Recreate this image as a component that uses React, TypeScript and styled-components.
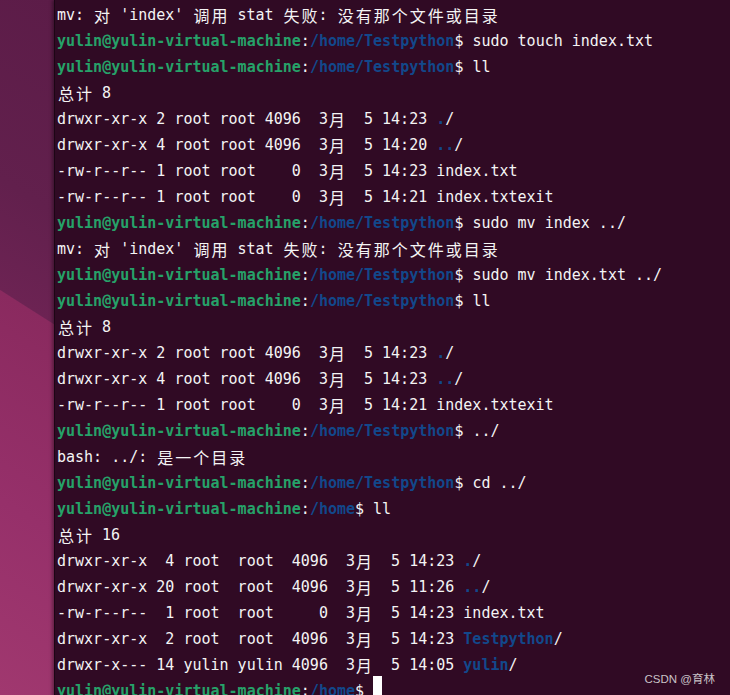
import React from "react";
import styled, { createGlobalStyle } from "styled-components";

const Global = createGlobalStyle`
  html, body { margin: 0; padding: 0; background: #300a24; }
  body { overflow: hidden; }
`;

const Screen = styled.div`
  display: flex;
  flex-direction: row;
  width: 730px;
  height: 695px;
  overflow: hidden;
  position: relative;
`;

const Wallpaper = styled.div`
  width: 54px;
  flex: 0 0 54px;
  height: 100%;
  background:
    linear-gradient(212.5deg,
      #5c1c48 0px,
      #62204d 180px,
      #6c2353 273px,
      #8a2a5f 274px,
      #96306a 450px,
      #a0386f 615px);
`;

const Terminal = styled.div`
  flex: 1;
  height: 100%;
  background: #300a24;
  border-left: 1px solid #1c0615;
  box-shadow: -2px 0 3px rgba(0, 0, 0, 0.35);
  padding: 2px 0 0 2px;
  font-family: "DejaVu Sans Mono", "Liberation Mono", monospace;
  font-size: 15px;
  line-height: 26px;
  color: #f4f4f4;
`;

const Line = styled.div`
  white-space: pre;
  height: 26px;
`;

const Seg = styled.span<{ $c: "n" | "g" | "b" }>`
  color: ${(p) => (p.$c === "g" ? "#26a269" : p.$c === "b" ? "#12488b" : "#f4f4f4")};
  font-weight: ${(p) => (p.$c === "n" ? "normal" : "bold")};
`;

const Wide = styled.span`
  display: inline-block;
  width: 18px;
  text-align: center;
  font-family: "Noto Sans CJK SC", sans-serif;
  font-size: 16px;
  line-height: 26px;
  vertical-align: top;
`;

const Cursor = styled.span`
  display: inline-block;
  width: 9px;
  height: 22px;
  background: #ffffff;
  vertical-align: top;
  margin-top: -2px;
`;

const Watermark = styled.div`
  position: absolute;
  right: 15px;
  bottom: 9px;
  font-family: "Liberation Sans", "Noto Sans CJK SC", sans-serif;
  font-size: 11.5px;
  color: #c9c2c7;
`;

const CJK = /[\u3000-\u9fff\uff00-\uffef]/;

function renderText(s: string) {
  const out: React.ReactNode[] = [];
  let buf = "";
  Array.from(s).forEach((ch, i) => {
    if (CJK.test(ch)) {
      if (buf) {
        out.push(buf);
        buf = "";
      }
      out.push(<Wide key={i}>{ch}</Wide>);
    } else {
      buf += ch;
    }
  });
  if (buf) out.push(buf);
  return out;
}

type S = ["n" | "g" | "b", string];

const P = (dir: string, cmd: string): S[] => [
  ["g", "yulin@yulin-virtual-machine"],
  ["n", ":"],
  ["b", dir],
  ["n", "$ " + cmd],
];

const T = "/home/Testpython";
const MVERR = "mv: 对 'index' 调用 stat 失败: 没有那个文件或目录";

const lines: S[][] = [
  [["n", MVERR]],
  P(T, "sudo touch index.txt"),
  P(T, "ll"),
  [["n", "总计 8"]],
  [["n", "drwxr-xr-x 2 root root 4096  3月  5 14:23 "], ["b", "."], ["n", "/"]],
  [["n", "drwxr-xr-x 4 root root 4096  3月  5 14:20 "], ["b", ".."], ["n", "/"]],
  [["n", "-rw-r--r-- 1 root root    0  3月  5 14:23 index.txt"]],
  [["n", "-rw-r--r-- 1 root root    0  3月  5 14:21 index.txtexit"]],
  P(T, "sudo mv index ../"),
  [["n", MVERR]],
  P(T, "sudo mv index.txt ../"),
  P(T, "ll"),
  [["n", "总计 8"]],
  [["n", "drwxr-xr-x 2 root root 4096  3月  5 14:23 "], ["b", "."], ["n", "/"]],
  [["n", "drwxr-xr-x 4 root root 4096  3月  5 14:23 "], ["b", ".."], ["n", "/"]],
  [["n", "-rw-r--r-- 1 root root    0  3月  5 14:21 index.txtexit"]],
  P(T, "../"),
  [["n", "bash: ../: 是一个目录"]],
  P(T, "cd ../"),
  P("/home", "ll"),
  [["n", "总计 16"]],
  [["n", "drwxr-xr-x  4 root  root  4096  3月  5 14:23 "], ["b", "."], ["n", "/"]],
  [["n", "drwxr-xr-x 20 root  root  4096  3月  5 11:26 "], ["b", ".."], ["n", "/"]],
  [["n", "-rw-r--r--  1 root  root     0  3月  5 14:23 index.txt"]],
  [["n", "drwxr-xr-x  2 root  root  4096  3月  5 14:23 "], ["b", "Testpython"], ["n", "/"]],
  [["n", "drwxr-x--- 14 yulin yulin 4096  3月  5 14:05 "], ["b", "yulin"], ["n", "/"]],
];

export default function App() {
  return (
    <>
      <Global />
      <Screen>
        <Wallpaper />
        <Terminal>
          {lines.map((segs, i) => (
            <Line key={i}>
              {segs.map(([c, t], j) => (
                <Seg key={j} $c={c}>
                  {renderText(t)}
                </Seg>
              ))}
            </Line>
          ))}
          <Line>
            {P("/home", "").map(([c, t], j) => (
              <Seg key={j} $c={c}>
                {t}
              </Seg>
            ))}
            <Cursor />
          </Line>
        </Terminal>
        <Watermark>CSDN @育林</Watermark>
      </Screen>
    </>
  );
}
